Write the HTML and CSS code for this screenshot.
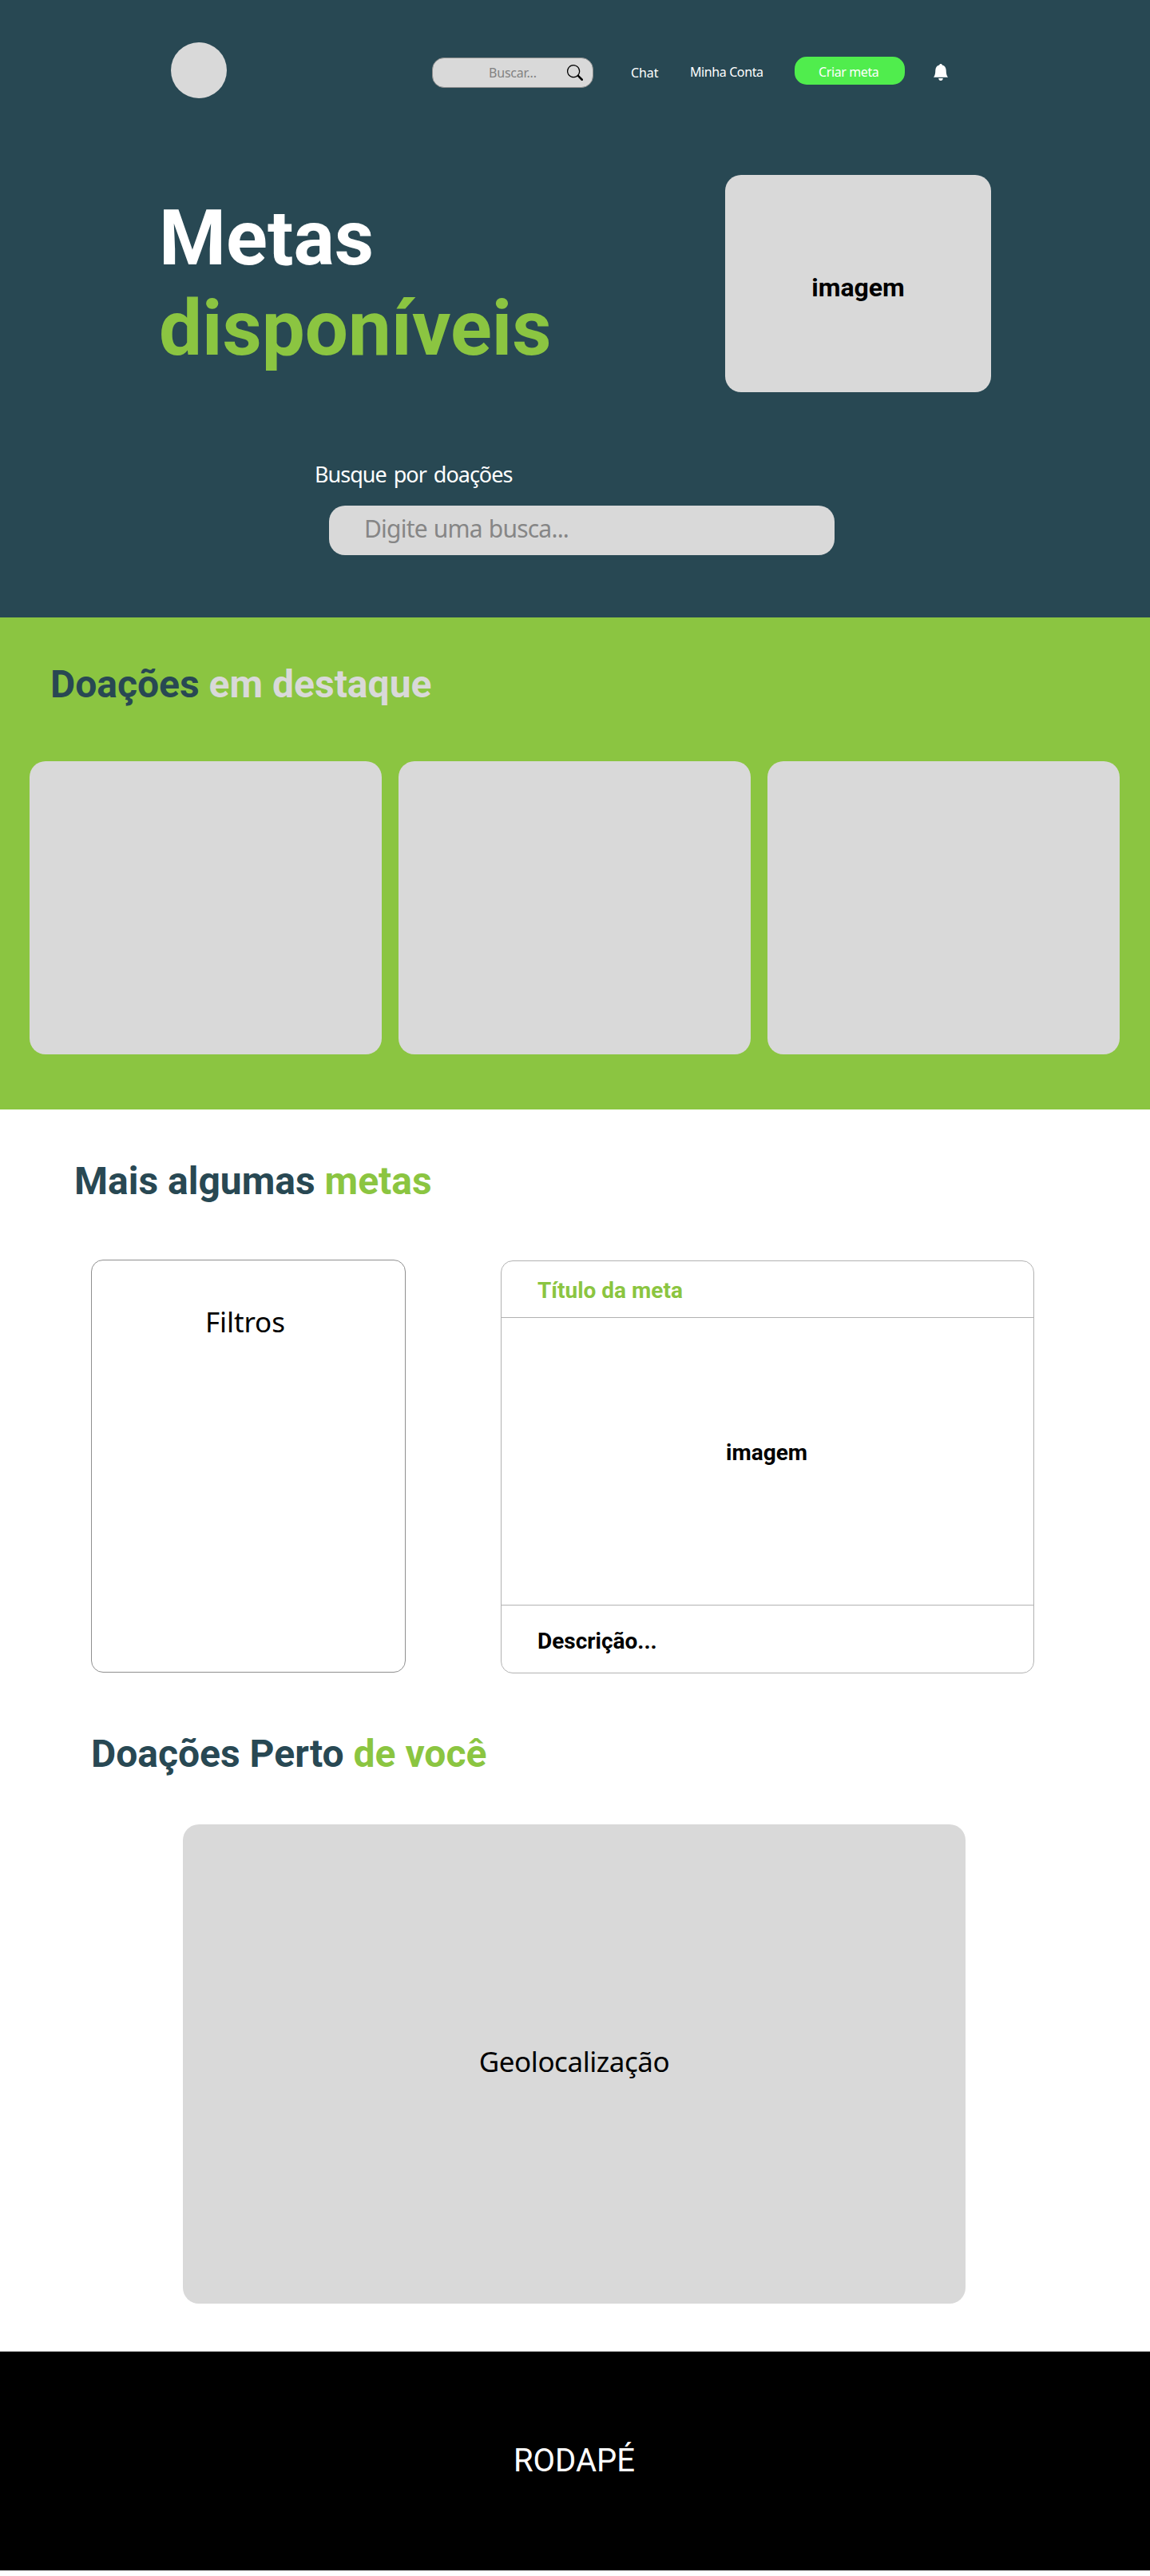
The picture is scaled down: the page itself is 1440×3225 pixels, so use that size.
FILE: index.html
```html
<!DOCTYPE html>
<html lang="pt-BR">
<head>
  <meta charset="utf-8">
  <title>Metas disponíveis</title>
  <link rel="stylesheet" href="styles.css">
</head>
<body>
  <header class="hero">
    <nav class="nav">
      <div class="logo"></div>
      <div class="nav-search">
        <span class="nav-search-text">Buscar...</span>
        <svg class="nav-search-icon" width="20" height="20" viewBox="0 0 16 16" fill="currentColor"><path d="M11.742 10.344a6.5 6.5 0 1 0-1.397 1.398h-.001q.044.06.098.115l3.85 3.85a1 1 0 0 0 1.415-1.414l-3.85-3.85a1 1 0 0 0-.115-.1zM12 6.5a5.5 5.5 0 1 1-11 0 5.5 5.5 0 0 1 11 0"/></svg>
      </div>
      <a class="nav-link nav-chat">Chat</a>
      <a class="nav-link nav-account">Minha Conta</a>
      <a class="nav-button">Criar meta</a>
      <svg class="bell" width="18" height="21" viewBox="0 0 18 21" fill="currentColor"><path d="M9 0c1 0 1.700.6 1.900 1.500C14 2.200 15.600 4.600 15.700 8c.1 4 .5 6.300 2.300 8.700H0C1.800 14.300 2.200 12 2.300 8 2.400 4.600 4 2.200 7.100 1.500 7.300.6 8 0 9 0zM6.200 18h5.600c-.2 1.800-1.200 3-2.800 3s-2.600-1.200-2.800-3z"/></svg>
    </nav>
    <div class="hero-main">
      <h1 class="hero-title">Metas<br><span class="green">disponíveis</span></h1>
      <div class="hero-image">imagem</div>
    </div>
    <div class="hero-search">
      <div class="hero-label">Busque por doações</div>
      <div class="hero-field">Digite uma busca...</div>
    </div>
  </header>

  <section class="featured">
    <h2 class="heading">Doações <span class="light">em destaque</span></h2>
    <div class="cards">
      <div class="card"></div>
      <div class="card"></div>
      <div class="card"></div>
    </div>
  </section>

  <section class="goals">
    <h2 class="heading">Mais algumas <span class="green">metas</span></h2>
    <div class="goals-row">
      <aside class="filters">Filtros</aside>
      <article class="goal">
        <h3 class="goal-title">Título da meta</h3>
        <div class="goal-image">imagem</div>
        <p class="goal-text">Descrição...</p>
      </article>
    </div>
  </section>

  <section class="nearby">
    <h2 class="heading">Doações Perto <span class="green">de você</span></h2>
    <div class="map">Geolocalização</div>
  </section>

  <footer class="footer">RODAPÉ</footer>
</body>
</html>
```

FILE: styles.css
```css
* {
  box-sizing: border-box;
}

body {
  margin: 0;
  background: #fff;
  color: #000;
  font-family: "Noto Sans", sans-serif;
}

h1, h2, h3, p {
  margin: 0;
}

.green {
  color: #8bc541;
}

.light {
  color: #d9d9d9;
}

.heading {
  font: 700 48px/56px Roboto, sans-serif;
  color: #284853;
}

/* Hero */
.hero {
  height: 773px;
  padding-top: 53px;
  background: #284853;
  color: #fff;
}

.nav {
  display: flex;
  align-items: flex-start;
  height: 70px;
  padding-left: 214px;
  font-size: 16px;
  line-height: 22px;
}

.logo {
  width: 70px;
  height: 70px;
  border-radius: 50%;
  background: #d9d9d9;
}

.nav-search {
  display: flex;
  justify-content: space-between;
  width: 202px;
  height: 38px;
  margin: 19px 0 0 257px;
  padding: 7px 12px 0 70px;
  border: 1px solid #8f8f8f;
  border-radius: 15px;
  background: #d9d9d9;
}

.nav-search-text {
  color: #828282;
  letter-spacing: -0.2px;
}

.nav-search-icon {
  margin-top: 1px;
  color: #000;
}

.nav-link,
.nav-button {
  white-space: nowrap;
  letter-spacing: -0.4px;
}

.nav-chat {
  width: 74px;
  margin: 27px 0 0 47px;
  letter-spacing: -0.1px;
}

.nav-account {
  width: 131px;
  margin-top: 26px;
}

.nav-button {
  width: 138px;
  height: 35px;
  margin-top: 18px;
  padding: 8px 0 0 30px;
  border-radius: 15px;
  background: #50ed4d;
}

.bell {
  margin: 27px 0 0 36px;
}

.hero-main {
  display: flex;
  justify-content: space-between;
  margin-top: 96px;
  padding: 0 199px;
}

.hero-title {
  padding-top: 23px;
  font: 700 96px/113px Roboto, sans-serif;
}

.hero-image {
  width: 333px;
  height: 272px;
  border-radius: 20px;
  background: #d9d9d9;
  color: #000;
  font: 700 32px/283px Roboto, sans-serif;
  text-align: center;
}

.hero-search {
  margin-top: 85px;
}

.hero-label {
  padding-left: 394px;
  font-size: 27px;
  line-height: 36px;
  letter-spacing: -1px;
  word-spacing: 3px;
}

.hero-field {
  width: 633px;
  height: 62px;
  margin: 21px 0 0 412px;
  padding-left: 44px;
  border-radius: 20px;
  background: #d9d9d9;
  color: #868686;
  font-size: 30px;
  line-height: 58px;
  letter-spacing: -0.8px;
  word-spacing: 1px;
}

/* Featured donations */
.featured {
  height: 616px;
  padding: 56px 37px 0;
  background: #8bc541;
}

.featured .heading {
  padding-left: 26px;
}

.cards {
  display: flex;
  gap: 21px;
  margin-top: 68px;
}

.card {
  width: 441px;
  height: 367px;
  border-radius: 20px;
  background: #d9d9d9;
}

/* More goals */
.goals {
  padding: 62px 0 0 93px;
}

.goals-row {
  display: flex;
  margin-top: 70px;
  padding-left: 21px;
}

.filters {
  width: 394px;
  height: 517px;
  padding: 53px 0 0 142px;
  border: 1px solid #8f8f8f;
  border-radius: 15px;
  font-size: 35px;
  line-height: 48px;
  letter-spacing: -0.1px;
}

.goal {
  display: flex;
  flex-direction: column;
  width: 668px;
  height: 517px;
  margin: 1px 0 0 119px;
  border: 1px solid #b2b2b2;
  border-radius: 15px;
  font: 700 28px/33px Roboto, sans-serif;
}

.goal-title {
  height: 71px;
  padding: 20px 0 0 45px;
  border-bottom: 1px solid #b2b2b2;
  color: #8bc541;
  font: inherit;
}

.goal-image {
  display: flex;
  flex: 1;
  align-items: center;
  justify-content: center;
  padding: 0 2px 23px 0;
}

.goal-text {
  height: 85px;
  padding: 28px 0 0 45px;
  border-top: 1px solid #b2b2b2;
}

/* Nearby donations */
.nearby {
  padding: 73px 0 60px 114px;
}

.map {
  width: 980px;
  height: 600px;
  margin: 60px 0 0 115px;
  border-radius: 20px;
  background: #d9d9d9;
  font-size: 35px;
  line-height: 594px;
  letter-spacing: -0.45px;
  text-align: center;
}

.footer {
  height: 274px;
  padding-right: 2px;
  background: #000;
  color: #fff;
  font: 400 40px/273px Roboto, sans-serif;
  text-align: center;
}
```
